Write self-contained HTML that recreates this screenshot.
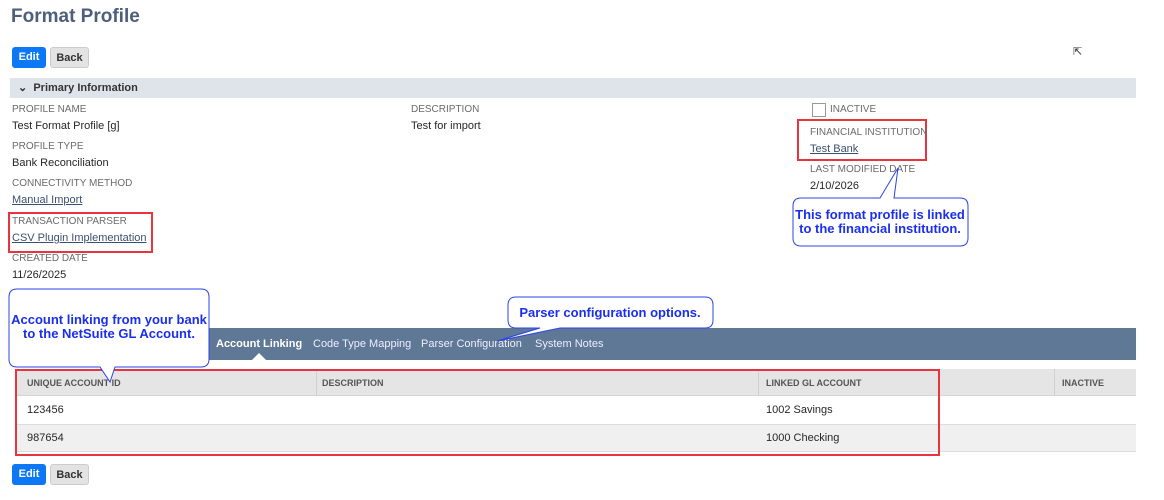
<!DOCTYPE html>
<html><head><meta charset="utf-8"><style>
*{margin:0;padding:0;box-sizing:border-box}
body{width:1164px;height:500px;background:#fff;font-family:"Liberation Sans",sans-serif;position:relative;overflow:hidden;color:#333}
.a{position:absolute;white-space:nowrap}
.lbl{font-size:10px;color:#6b6b6b}
.val{font-size:11px;color:#262626}
.lnk{font-size:11px;color:#3b5070;text-decoration:underline}
.btn{position:absolute;height:21px;border-radius:3px;font-size:11px;font-weight:bold;text-align:center;line-height:21px}
.edit{background:#0c78f5;color:#fff;width:34px}
.back{background:#e3e3e3;color:#333;border:1px solid #ccc;width:39px}
.th{font-size:9px;color:#555;font-weight:bold}
.red{border:2px solid #e8343f}
</style></head><body>
<div class="a" style="left:11px;top:6px;font-size:19px;font-weight:bold;color:#4d5f7a">Format Profile</div>
<div class="btn edit" style="left:12px;top:47px">Edit</div>
<div class="btn back" style="left:50px;top:47px">Back</div>
<div class="a" style="left:1073px;top:45px;font-size:11px">⇱</div>
<div class="a" style="left:10px;top:78px;width:1126px;height:20px;background:#dfe4eb"></div>
<div class="a" style="left:18px;top:81px;font-size:11px;font-weight:bold;color:#333">⌄&nbsp;&nbsp;Primary Information</div>

<div class="a lbl" style="left:12px;top:104px">PROFILE NAME</div>
<div class="a val" style="left:12px;top:120px">Test Format Profile [g]</div>
<div class="a lbl" style="left:12px;top:141px">PROFILE TYPE</div>
<div class="a val" style="left:12px;top:157px">Bank Reconciliation</div>
<div class="a lbl" style="left:12px;top:178px">CONNECTIVITY METHOD</div>
<div class="a lnk" style="left:12px;top:194px">Manual Import</div>
<div class="a red" style="left:8px;top:212px;width:145px;height:41px"></div>
<div class="a lbl" style="left:12px;top:216px">TRANSACTION PARSER</div>
<div class="a lnk" style="left:12px;top:232px">CSV Plugin Implementation</div>
<div class="a lbl" style="left:12px;top:253px">CREATED DATE</div>
<div class="a val" style="left:12px;top:269px">11/26/2025</div>

<div class="a lbl" style="left:411px;top:104px">DESCRIPTION</div>
<div class="a val" style="left:411px;top:120px">Test for import</div>

<div class="a" style="left:812px;top:103px;width:14px;height:14px;border:1px solid #999"></div>
<div class="a lbl" style="left:830px;top:104px">INACTIVE</div>
<div class="a red" style="left:797px;top:119px;width:130px;height:42px"></div>
<div class="a lbl" style="left:810px;top:127px">FINANCIAL INSTITUTION</div>
<div class="a lnk" style="left:810px;top:143px">Test Bank</div>
<div class="a lbl" style="left:810px;top:164px">LAST MODIFIED DATE</div>
<div class="a val" style="left:810px;top:180px">2/10/2026</div>

<div class="a" style="left:10px;top:328px;width:1126px;height:32px;background:#5f7896"></div>
<div class="a" style="left:216px;top:338px;font-size:11px;color:#fff;font-weight:bold">Account Linking</div>
<div class="a" style="left:313px;top:338px;font-size:11px;color:#eef">Code Type Mapping</div>
<div class="a" style="left:421px;top:338px;font-size:11px;color:#eef">Parser Configuration</div>
<div class="a" style="left:535px;top:338px;font-size:11px;color:#eef">System Notes</div>
<div class="a" style="left:252px;top:353px;width:0;height:0;border-left:7px solid transparent;border-right:7px solid transparent;border-bottom:7px solid #fff"></div>

<div class="a" style="left:16px;top:369px;width:1120px;height:27px;background:#e5e5e5;border-bottom:1px solid #d5d5d5"></div>
<div class="a" style="left:316px;top:369px;width:1px;height:27px;background:#d0d0d0"></div>
<div class="a" style="left:758px;top:369px;width:1px;height:27px;background:#d0d0d0"></div>
<div class="a" style="left:1054px;top:369px;width:1px;height:27px;background:#d0d0d0"></div>
<div class="a th" style="left:27px;top:378px">UNIQUE ACCOUNT ID</div>
<div class="a th" style="left:322px;top:378px">DESCRIPTION</div>
<div class="a th" style="left:766px;top:378px">LINKED GL ACCOUNT</div>
<div class="a th" style="left:1062px;top:378px">INACTIVE</div>
<div class="a" style="left:16px;top:424px;width:1120px;height:28px;background:#f0f0f0;border-top:1px solid #ddd;border-bottom:1px solid #ddd"></div>
<div class="a val" style="left:27px;top:404px">123456</div>
<div class="a val" style="left:766px;top:404px">1002 Savings</div>
<div class="a val" style="left:27px;top:432px">987654</div>
<div class="a val" style="left:766px;top:432px">1000 Checking</div>
<div class="a red" style="left:15px;top:369px;width:925px;height:87px"></div>

<div class="btn edit" style="left:12px;top:464px">Edit</div>
<div class="btn back" style="left:50px;top:464px">Back</div>

<svg class="a" style="left:0;top:0" width="1164" height="500">
<g fill="#fff" stroke="#2b44e8" stroke-width="1">
<path d="M17,289 H201 Q209,289 209,297 V359 Q209,367 201,367 H115 L110,382 L100,367 H17 Q9,367 9,359 V297 Q9,289 17,289 Z"/>
<path d="M516,297 H705 Q713,297 713,305 V320 Q713,328 705,328 H560 L497,341 L540,328 H516 Q508,328 508,320 V305 Q508,297 516,297 Z"/>
<path d="M801,198 H880 L898,168 L894,198 H960 Q968,198 968,206 V238 Q968,246 960,246 H801 Q793,246 793,238 V206 Q793,198 801,198 Z"/>
</g>
<g font-family="Liberation Sans,sans-serif" font-size="13" font-weight="bold" fill="#1a2ef0" text-anchor="middle">
<text x="109" y="324">Account linking from your bank</text>
<text x="109" y="338">to the NetSuite GL Account.</text>
<text x="610" y="317">Parser configuration options.</text>
<text x="880" y="219">This format profile is linked</text>
<text x="880" y="233">to the financial institution.</text>
</g>
</svg>
</body></html>
